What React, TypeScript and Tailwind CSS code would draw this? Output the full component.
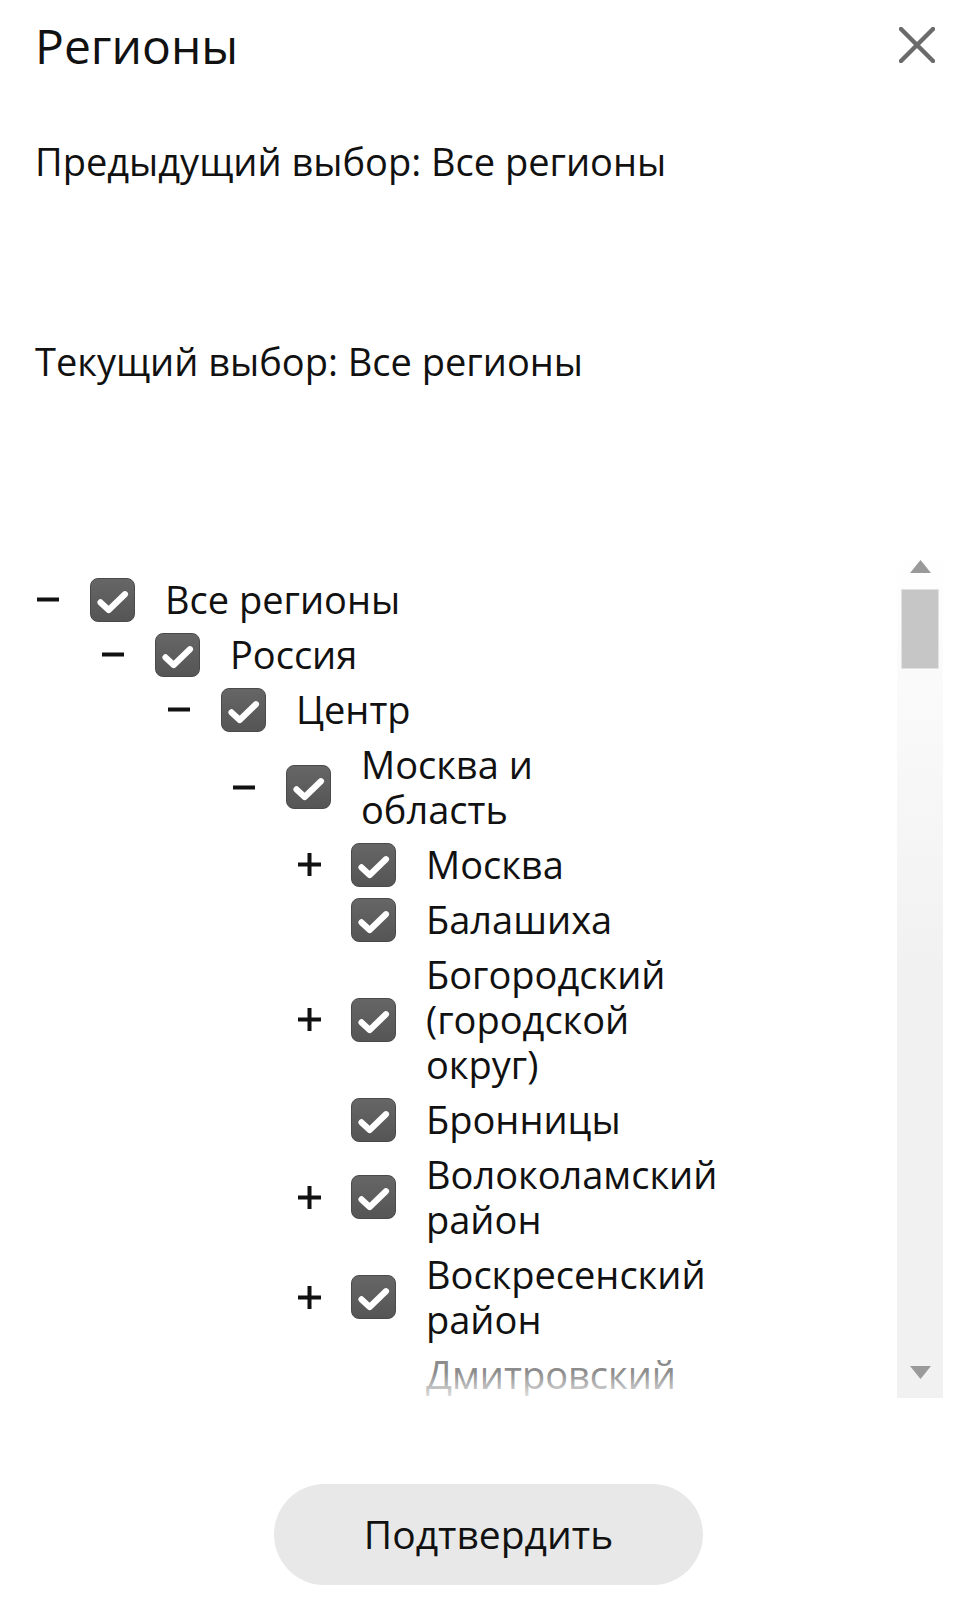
import React from 'react';

type Node = {
  label: string;
  level: 0 | 1 | 2 | 3 | 4;
  toggle?: 'minus' | 'plus';
  faded?: boolean;
};

const nodes: Node[] = [
  { label: 'Все регионы', level: 0, toggle: 'minus' },
  { label: 'Россия', level: 1, toggle: 'minus' },
  { label: 'Центр', level: 2, toggle: 'minus' },
  { label: 'Москва и область', level: 3, toggle: 'minus' },
  { label: 'Москва', level: 4, toggle: 'plus' },
  { label: 'Балашиха', level: 4 },
  { label: 'Богородский (городской округ)', level: 4, toggle: 'plus' },
  { label: 'Бронницы', level: 4 },
  { label: 'Волоколамский район', level: 4, toggle: 'plus' },
  { label: 'Воскресенский район', level: 4, toggle: 'plus' },
  { label: 'Дмитровский район', level: 4, toggle: 'plus', faded: true },
];

const indent = ['pl-[37px]', 'pl-[102px]', 'pl-[168px]', 'pl-[233px]', 'pl-[298px]'];

const Toggle: React.FC<{ kind?: 'minus' | 'plus' }> = ({ kind }) => (
  <span className="w-[53px] shrink-0 flex items-center">
    {kind === 'minus' && (
      <svg width="23" height="23" viewBox="0 0 23 23">
        <rect x="0" y="9.5" width="22" height="4" fill="#111" />
      </svg>
    )}
    {kind === 'plus' && (
      <svg width="23" height="23" viewBox="0 0 23 23">
        <rect x="0" y="9.5" width="23" height="4" fill="#111" />
        <rect x="9.5" y="0" width="4" height="23" fill="#111" />
      </svg>
    )}
  </span>
);

const Checkbox: React.FC = () => (
  <span className="w-[45px] h-[44px] shrink-0 rounded-[8px] bg-gradient-to-b from-[#666] to-[#555] border border-[#4a4a4a] flex items-center justify-center">
    <svg width="45" height="44" viewBox="0 0 45 44">
      <polyline
        points="10,24.5 18.5,32.5 35.5,16"
        fill="none"
        stroke="#fff"
        strokeWidth="6.5"
        strokeLinecap="round"
        strokeLinejoin="round"
      />
    </svg>
  </span>
);

const TreeRow: React.FC<Node> = ({ label, level, toggle, faded }) => (
  <div className={`flex items-center py-[5px] ${indent[level]}`}>
    <div className={`flex items-center ${faded ? 'invisible' : ''}`}>
      <Toggle kind={toggle} />
      <Checkbox />
    </div>
    <span
      className={`ml-[30px] w-[305px] text-[38px] leading-[45px] ${faded ? 'text-[#8c8c8c]' : 'text-[#111]'}`}
    >
      {label}
    </span>
  </div>
);

const Triangle: React.FC<{ up?: boolean }> = ({ up }) => (
  <svg width="21" height="13" viewBox="0 0 21 13">
    <polygon points={up ? '10.5,0 21,13 0,13' : '0,0 21,0 10.5,13'} fill="#9a9a9a" />
  </svg>
);

export default function App() {
  return (
    <div className="w-[971px] h-[1620px] bg-white font-['Open_Sans','Noto_Sans',sans-serif] text-[#111] flex flex-col overflow-hidden">
      <div className="flex items-start justify-between pl-[35px] pr-[36px] mt-[17px]">
        <h1 className="text-[48px] leading-[58px] font-normal">Регионы</h1>
        <button className="mt-[10px] w-[36px] h-[36px] flex items-center justify-center">
          <svg width="36" height="36" viewBox="0 0 36 36">
            <path d="M2 2 L34 34 M34 2 L2 34" stroke="#6b6b6b" strokeWidth="4.5" strokeLinecap="round" />
          </svg>
        </button>
      </div>

      <p className="pl-[35px] mt-[64px] text-[38px] leading-[45px]">Предыдущий выбор: Все регионы</p>
      <p className="pl-[35px] mt-[155px] text-[38px] leading-[45px]">Текущий выбор: Все регионы</p>

      <div className="mt-[157px] h-[857px] flex pr-[28px]">
        <div className="flex-1 pt-[31px]">
          <div className="relative h-[824px] overflow-hidden">
            {nodes.map((n) => (
              <TreeRow key={n.label} {...n} />
            ))}
            <div className="absolute left-0 right-0 bottom-0 h-[24px] bg-gradient-to-b from-white/0 to-white/70" />
          </div>
        </div>
        <div className="w-[46px] flex flex-col items-center bg-gradient-to-b from-white via-[#f1f1f1] to-[#f1f1f1]">
          <div className="mt-[19px]">
            <Triangle up />
          </div>
          <div className="mt-[16px] w-[38px] h-[80px] bg-[#c6c6c6] border border-[#e2e2e2]" />
          <div className="flex-1" />
          <div className="mb-[19px]">
            <Triangle />
          </div>
        </div>
      </div>

      <div className="mt-[86px] flex justify-center">
        <button className="w-[429px] h-[101px] rounded-full bg-[#e8e8e8] text-[39px] text-[#111] translate-x-[3px]">
          Подтвердить
        </button>
      </div>
    </div>
  );
}
